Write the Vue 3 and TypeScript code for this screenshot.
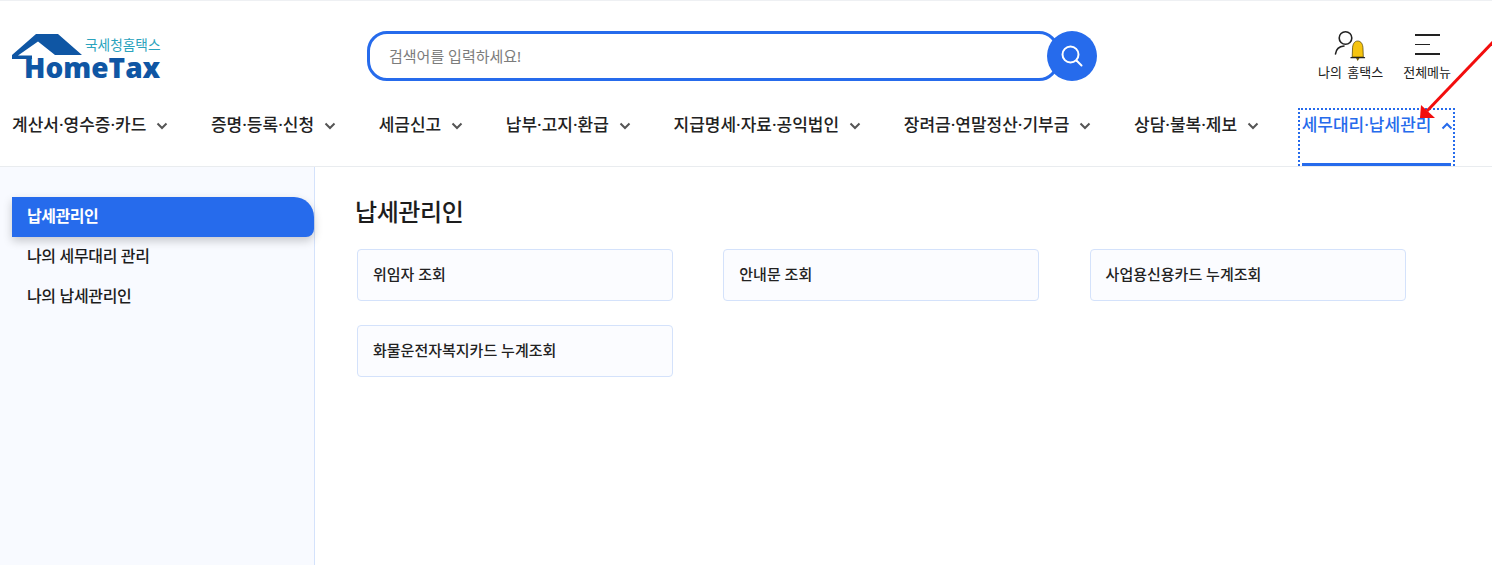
<script setup lang="ts">
const navItems: string[] = [
  '계산서·영수증·카드',
  '증명·등록·신청',
  '세금신고',
  '납부·고지·환급',
  '지급명세·자료·공익법인',
  '장려금·연말정산·기부금',
  '상담·불복·제보',
]
const sideItems: string[] = ['납세관리인', '나의 세무대리 관리', '나의 납세관리인']
const cards: string[] = ['위임자 조회', '안내문 조회', '사업용신용카드 누계조회', '화물운전자복지카드 누계조회']
</script>

<template>
  <div class="page">
    <header class="header">
      <div class="top">
        <a class="logo">
          <svg class="house" width="72" height="28" viewBox="0 0 72 28">
            <path d="M0 21 L24 0 L46 0 L70 21 L43 21 L26 7.5 L6 21.5 L20 21.5 L20 25 L0 25 Z" fill="#0f56a4" />
          </svg>
          <span class="logo-sub">국세청홈택스</span>
          <span class="logo-main">HomeTax</span>
        </a>
        <div class="search">
          <div class="search-box">검색어를 입력하세요!</div>
          <button class="search-btn" aria-label="검색">
            <svg width="24" height="24" viewBox="0 0 24 24" fill="none" stroke="#fff" stroke-width="2" stroke-linecap="round">
              <circle cx="10.5" cy="10.5" r="8" />
              <path d="M16.5 16.5 L21.5 21.5" />
            </svg>
          </button>
        </div>
        <div class="utils">
          <div class="util my">
            <svg width="36" height="34" viewBox="0 0 36 34" fill="none">
              <circle cx="12.5" cy="10" r="6.3" stroke="#222" stroke-width="1.6" />
              <path d="M2.5 26 C3 21.5 6 18.5 11 18" stroke="#222" stroke-width="1.6" stroke-linecap="round" />
              <path d="M19.2 29 L19.5 21 C19.5 16 21.5 13 24.7 13 C28 13 30 16 30 21 L30.3 29 Z" fill="#f6c40f" stroke="#4a3c00" stroke-width="0.7" />
              <path d="M18 29.7 H31.5" stroke="#222" stroke-width="1.3" stroke-linecap="round" />
              <path d="M23 30 H26.5 L24.7 33 Z" fill="#6b5200" />
            </svg>
            <span>나의 홈택스</span>
          </div>
          <div class="util all">
            <span class="burger"><i class="l1"></i><i class="l2"></i><i class="l3"></i></span>
            <span>전체메뉴</span>
          </div>
        </div>
      </div>
      <nav class="nav">
        <a v-for="item in navItems" :key="item" class="nav-item">
          <span>{{ item }}</span>
          <svg width="12" height="8" viewBox="0 0 12 8" fill="none" stroke="#555" stroke-width="2"><path d="M1.5 1.5 L6 6 L10.5 1.5" /></svg>
        </a>
        <a class="nav-item active">
          <span>세무대리·납세관리</span>
          <svg width="12" height="8" viewBox="0 0 12 8" fill="none" stroke="#266bec" stroke-width="2"><path d="M1.5 6.5 L6 2 L10.5 6.5" /></svg>
        </a>
      </nav>
    </header>
    <div class="body">
      <aside class="side">
        <a v-for="(s, i) in sideItems" :key="s" class="side-item" :class="{ on: i === 0 }">{{ s }}</a>
      </aside>
      <main class="main">
        <h2 class="title">납세관리인</h2>
        <div class="grid">
          <a v-for="c in cards" :key="c" class="card">{{ c }}</a>
        </div>
      </main>
    </div>
    <svg class="arrow" width="90" height="90" viewBox="0 0 90 90" fill="none">
      <path d="M81 9 L15 78" stroke="#f20d0d" stroke-width="3" />
      <path d="M8 85 L9 72 L23 85 Z" fill="#f20d0d" />
    </svg>
  </div>
</template>

<style scoped>
.page {
  position: relative;
  width: 1492px;
  height: 565px;
  overflow: hidden;
  background: #fff;
  font-family: "Noto Sans", "Noto Sans CJK KR", sans-serif;
  color: #1d1d1d;
  border-top: 1px solid #eef0f3;
  box-sizing: border-box;
}
.header {
  height: 165px;
  border-bottom: 1px solid #e9ecef;
}
.top {
  display: flex;
  height: 107px;
  padding: 0 40px 0 12px;
}
.logo {
  position: relative;
  width: 355px;
  display: block;
}
.house {
  position: absolute;
  left: 0;
  top: 33px;
}
.logo-sub {
  position: absolute;
  left: 73px;
  top: 36px;
  font-size: 13.7px;
  line-height: 16px;
  color: #2ba3bd;
}
.logo-main {
  position: absolute;
  left: 12px;
  top: 52px;
  font-family: "Open Sans", sans-serif;
  font-weight: 800;
  font-size: 28px;
  line-height: 28px;
  color: #0f56a4;
}
.search {
  position: relative;
  display: flex;
  align-items: center;
  width: 730px;
  height: 50px;
  margin-top: 30px;
}
.search-box {
  width: 692px;
  height: 50px;
  box-sizing: border-box;
  border: 3px solid #266bec;
  border-radius: 20px;
  padding-left: 19px;
  font-size: 15px;
  line-height: 44px;
  color: #7c7c7c;
}
.search-btn {
  position: absolute;
  left: 680px;
  top: 0;
  width: 50px;
  height: 50px;
  border: 0;
  padding: 0;
  border-radius: 50%;
  background: #266bec;
  display: flex;
  align-items: center;
  justify-content: center;
}
.utils {
  display: flex;
  margin-left: 221px;
  gap: 20px;
  padding-top: 27px;
}
.util {
  display: flex;
  flex-direction: column;
  align-items: center;
  font-size: 13px;
  line-height: 18px;
  word-spacing: 2px;
  color: #222;
}
.util svg {
  display: block;
  margin-bottom: 1px;
}
.burger {
  display: flex;
  flex-direction: column;
  width: 25px;
  height: 35px;
  padding-top: 6px;
  box-sizing: border-box;
}
.burger i {
  display: block;
  height: 2px;
  background: #222;
  margin-bottom: 8px;
}
.burger .l2 {
  width: 15px;
}
.nav {
  display: flex;
  padding-left: 12px;
  height: 58px;
}
.nav-item {
  display: flex;
  align-items: flex-start;
  gap: 10px;
  margin-right: 42.6px;
  font-size: 17px;
  font-weight: 500;
  line-height: 34px;
  color: #222;
  white-space: nowrap;
}
.nav-item svg {
  margin-top: 14px;
}
.nav-item.active {
  position: relative;
  color: #266bec;
  margin-right: 0;
}
.nav-item.active::before {
  content: "";
  position: absolute;
  left: -4px;
  right: -2px;
  top: 0;
  bottom: 0;
  border: 2px dotted #266bec;
  border-bottom: 0;
  pointer-events: none;
}
.nav-item.active::after {
  content: "";
  position: absolute;
  left: 0;
  right: 2px;
  bottom: 0;
  height: 3px;
  background: #266bec;
}
.body {
  display: flex;
  height: 398px;
}
.side {
  width: 315px;
  box-sizing: border-box;
  padding: 30px 0 0 12px;
  background: #f8faff;
  border-right: 1px solid #d4e2fb;
  flex: none;
}
.side-item {
  display: block;
  height: 40px;
  padding-left: 15px;
  font-size: 16px;
  font-weight: 500;
  line-height: 38px;
  color: #1d1d1d;
  letter-spacing: -0.35px;
}
.side-item.on {
  width: 302px;
  box-sizing: border-box;
  background: #266bec;
  color: #fff;
  font-weight: 700;
  letter-spacing: -0.5px;
  border-radius: 0 20px 8px 0;
  box-shadow: 0 4px 10px rgba(0, 0, 0, 0.2);
}
.main {
  flex: 1;
  padding: 27px 0 0 40px;
}
.title {
  margin: 0 0 19px;
  font-size: 24px;
  font-weight: 500;
  line-height: 36px;
  color: #1d1d1d;
  letter-spacing: -0.4px;
}
.grid {
  display: grid;
  grid-template-columns: repeat(3, 316px);
  column-gap: 50.3px;
  row-gap: 24px;
  margin-left: 2px;
}
.card {
  display: block;
  height: 52px;
  box-sizing: border-box;
  padding-left: 15px;
  border: 1px solid #d4e2fb;
  border-radius: 4px;
  background: #fbfcff;
  font-size: 15px;
  font-weight: 500;
  line-height: 48px;
  color: #222;
}
.arrow {
  position: absolute;
  left: 1412px;
  top: 32px;
  pointer-events: none;
}
</style>
